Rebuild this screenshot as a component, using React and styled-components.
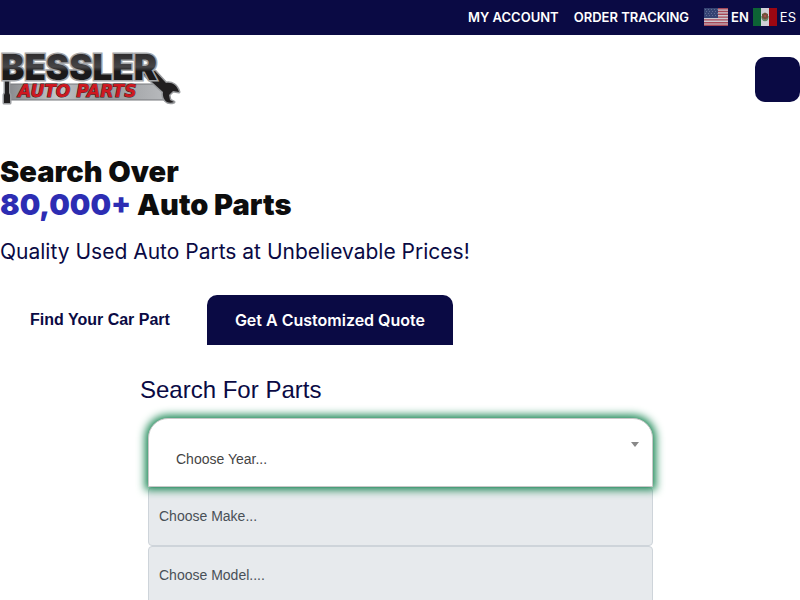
import React from "react";
import styled, { createGlobalStyle } from "styled-components";

const GlobalStyle = createGlobalStyle`
  * {
    box-sizing: border-box;
  }
  body {
    margin: 0;
    background: #fff;
    color: #0a0a44;
    font-family: Inter, sans-serif;
    overflow-x: hidden;
  }
  h1, h2, p {
    margin: 0;
  }
`;

const TopBar = styled.nav`
  height: 35px;
  padding: 0 4px 2px 0;
  display: flex;
  align-items: center;
  justify-content: flex-end;
  gap: 15px;
  background: #0a0a44;
`;

const TopLink = styled.a`
  display: flex;
  align-items: center;
  gap: 3px;
  color: #fff;
  font-size: 13px;
  line-height: 20px;
  font-weight: ${(props) => (props.$light ? 400 : 600)};
  text-decoration: none;
`;

const Languages = styled.div`
  display: flex;
  gap: 4px;
`;

const Header = styled.header`
  height: 88px;
  display: flex;
  align-items: center;
  justify-content: space-between;
`;

const LogoLink = styled.a`
  display: flex;
`;

const MenuButton = styled.button`
  width: 45px;
  height: 45px;
  border: 0;
  border-radius: 10px;
  background: #0a0a44;
`;

const Hero = styled.section`
  padding-top: 32px;
`;

const Title = styled.h1`
  color: #0d0d0d;
  font-size: 29px;
  line-height: 33px;
  font-weight: 900;
`;

const Count = styled.span`
  color: #2d2db3;
`;

const Tagline = styled.p`
  padding: 15px 0 27px;
  font-size: 21px;
  line-height: 32px;
  font-weight: 400;
`;

const Tabs = styled.div`
  display: flex;
  gap: 7px;
`;

const Tab = styled.button`
  height: 50px;
  padding: 0 ${(props) => (props.$filled ? 28 : 30)}px;
  border: 0;
  border-radius: 10px 10px 0 0;
  background: ${(props) => (props.$filled ? "#0a0a44" : "#fff")};
  color: ${(props) => (props.$filled ? "#fff" : "#0a0a44")};
  font-family: ${(props) => (props.$filled ? "Inter" : '"Liberation Sans"')}, sans-serif;
  font-size: 16px;
  font-weight: ${(props) => (props.$filled ? 600 : 700)};
`;

const SearchForm = styled.form`
  max-width: 520px;
  margin: 0 auto;
  padding: 28px 7px 0 8px;
  font-family: "Liberation Sans", sans-serif;
`;

const FormTitle = styled.h2`
  margin-left: -8px;
  padding-bottom: 12px;
  font-size: 24px;
  line-height: 33px;
  font-weight: 400;
`;

const Field = styled.div`
  display: grid;
  align-items: center;

  > * {
    grid-area: 1 / 1;
  }
`;

const Select = styled.select`
  appearance: none;
  display: block;
  width: 100%;
  height: 59px;
  padding: 0 10px 2px;
  border: 1px solid #ced4da;
  border-radius: 4px;
  background: #e7eaed;
  color: #495057;
  font-family: "Liberation Sans", sans-serif;
  font-size: 14px;
  opacity: 1;
`;

const YearSelect = styled(Select)`
  position: relative;
  height: 69px;
  padding: 12px 27px 0;
  border-color: #c8c8c8;
  border-radius: 20px 20px 0 0;
  background: #fff;
  color: #444;
  box-shadow: 0 0 8px 3px #198754;
`;

const Caret = styled.span`
  z-index: 1;
  justify-self: end;
  margin: 0 14px 16px 0;
  border: solid transparent;
  border-width: 5px 4px 0;
  border-top-color: #888;
  pointer-events: none;
`;

const Logo = () => (
  <svg width="180" height="52" viewBox="0 0 180 52" overflow="visible" role="img" aria-label="Bessler Auto Parts">
    <defs>
      <linearGradient id="steel" x1="0" y1="0" x2="1" y2="0">
        <stop offset="0" stopColor="#8a8c8f" />
        <stop offset="0.3" stopColor="#c3c5c8" />
        <stop offset="0.6" stopColor="#96989b" />
        <stop offset="1" stopColor="#b8babd" />
      </linearGradient>
      <linearGradient id="iron" x1="0" y1="0" x2="0" y2="1">
        <stop offset="0" stopColor="#211f20" />
        <stop offset="0.5" stopColor="#464547" />
        <stop offset="0.6" stopColor="#1b191a" />
      </linearGradient>
    </defs>
    <path d="M10 31H163L165 47H10z" fill="url(#steel)" stroke="#77797c" />
    {/* screwdriver and wrench */}
    <g fill="#211f20" stroke="#9a9c9f" strokeWidth="3" strokeLinejoin="round" paintOrder="stroke">
      <path d="M5 26h4v14l1 2v8H4v-8l1-2z" />
      <path d="M142 20l13-2 11 12c6-1 11 2 13 9l-6-1-4 4 1 5 4 2c-7 3-12-3-11-10z" />
    </g>
    <text
      x="1"
      y="27"
      fill="url(#iron)"
      stroke="#a4a6a9"
      strokeWidth="3"
      paintOrder="stroke"
      fontFamily="Inter, sans-serif"
      fontWeight="900"
      fontSize="35"
    >
      BESSLER
    </text>
    <text
      x="18"
      y="44"
      fill="#cf1820"
      stroke="#3c2021"
      strokeWidth="1"
      paintOrder="stroke"
      fontFamily="DejaVu Sans, sans-serif"
      fontWeight="700"
      fontStyle="italic"
      fontSize="17"
    >
      AUTO PARTS
    </text>
  </svg>
);

const UsFlag = () => (
  <svg width="24" height="18" viewBox="0 0 24 18" aria-hidden="true">
    <path fill="#cbc8d0" d="M0 0h24v18H0z" />
    <path
      stroke="#a64858"
      strokeWidth="1.4"
      d="M0 .7h24M0 3.5h24M0 6.3h24M0 9.1h24M0 11.9h24M0 14.7h24M0 17.3h24"
    />
    <path fill="#354373" d="M0 0h14v10H0z" />
    <path stroke="#5f6b94" strokeDasharray="1 2" d="M1 1.5h13M2 3.5h12M1 5.5h13M2 7.5h12" />
  </svg>
);

const MxFlag = () => (
  <svg width="24" height="18" viewBox="0 0 24 18" aria-hidden="true">
    <path fill="#d0d0d8" d="M0 0h24v18H0z" />
    <path fill="#0d6335" d="M0 0h8v18H0z" />
    <path fill="#9c0712" d="M16 0h8v18h-8z" />
    <path fill="none" stroke="#638d6b" strokeWidth="1.5" d="M9 8c0 6 6 6 6 0" />
    <path fill="#70533c" d="M9 6l3-1.500 3 1.500v4l-3 2-3-2z" />
    <path fill="#a84a4b" d="M11 7h2v2h-2z" />
  </svg>
);

const App = () => {
  return (
    <>
      <GlobalStyle />
      <TopBar>
        <TopLink href="#account">MY ACCOUNT</TopLink>
        <TopLink href="#tracking">ORDER TRACKING</TopLink>
        <Languages>
          <TopLink href="#en">
            <UsFlag />
            EN
          </TopLink>
          <TopLink href="#es" $light>
            <MxFlag />
            ES
          </TopLink>
        </Languages>
      </TopBar>
      <Header>
        <LogoLink href="#home">
          <Logo />
        </LogoLink>
        <MenuButton type="button" aria-label="Menu" />
      </Header>
      <main>
        <Hero>
          <Title>
            Search Over
            <br />
            <Count>80,000+</Count> Auto Parts
          </Title>
          <Tagline>Quality Used Auto Parts at Unbelievable Prices!</Tagline>
          <Tabs>
            <Tab type="button">Find Your Car Part</Tab>
            <Tab type="button" $filled>
              Get A Customized Quote
            </Tab>
          </Tabs>
        </Hero>
        <SearchForm>
          <FormTitle>Search For Parts</FormTitle>
          <Field>
            <YearSelect aria-label="Year">
              <option>Choose Year...</option>
            </YearSelect>
            <Caret />
          </Field>
          <Select aria-label="Make" disabled>
            <option>Choose Make...</option>
          </Select>
          <Select aria-label="Model" disabled>
            <option>Choose Model....</option>
          </Select>
        </SearchForm>
      </main>
    </>
  );
};

export default App;
